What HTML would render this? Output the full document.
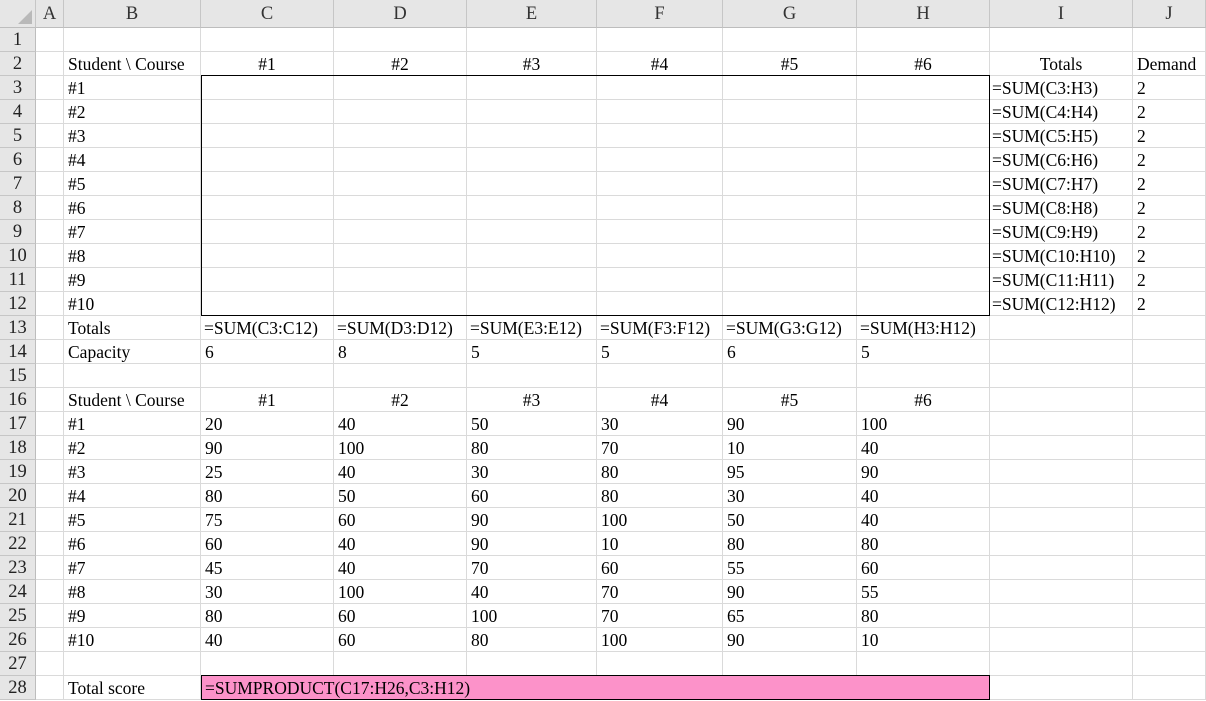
<!DOCTYPE html>
<html><head><meta charset="utf-8"><style>
body{margin:0;background:#fff;width:1206px;height:701px;overflow:hidden;position:relative;font-family:"Liberation Serif",serif;font-size:17.5px;color:#000}
table{border-collapse:separate;border-spacing:0;table-layout:fixed;position:absolute;left:0;top:0}
td{box-sizing:border-box;height:24px;border-right:1px solid #dadada;border-bottom:1px solid #dadada;padding:2px 0 0 4px;white-space:nowrap;overflow:visible;line-height:21px;vertical-align:top}
tr.h td{height:28px;background:#e6e6e6;color:#333;text-align:center;font-size:18.5px;border-right:1px solid #c6c6c6;border-bottom:1px solid #bdbdbd;padding:1px 0 0 0;line-height:26px}
td.r{background:#e6e6e6;color:#222;text-align:center;padding:2px 0 0 0;border-right:1px solid #bdbdbd;border-bottom:1px solid #c6c6c6;font-size:18.5px}
td.c{text-align:center;padding-left:0}
#box{position:absolute;left:201px;top:75px;width:789px;height:241px;border:1px solid #000;box-sizing:border-box}
#pink{position:absolute;left:201px;top:675px;width:789px;height:25px;border:1px solid #000;box-sizing:border-box;background:#fc92c9;padding-left:3px;line-height:25px}
#tri{position:absolute;left:18px;top:10px;width:0;height:0;border-left:14px solid transparent;border-bottom:14px solid #b9b9b9}
</style></head><body>
<table>
<colgroup><col style="width:36px"><col style="width:28px"><col style="width:137px"><col style="width:133px"><col style="width:133px"><col style="width:130px"><col style="width:126px"><col style="width:134px"><col style="width:133px"><col style="width:143px"><col style="width:73px"></colgroup>
<tr class="h"><td></td><td>A</td><td>B</td><td>C</td><td>D</td><td>E</td><td>F</td><td>G</td><td>H</td><td>I</td><td>J</td></tr>
<tr><td class="r">1</td><td></td><td></td><td></td><td></td><td></td><td></td><td></td><td></td><td></td><td></td></tr>
<tr><td class="r">2</td><td></td><td>Student \ Course</td><td class="c">#1</td><td class="c">#2</td><td class="c">#3</td><td class="c">#4</td><td class="c">#5</td><td class="c">#6</td><td class="c">Totals</td><td>Demand</td></tr>
<tr><td class="r">3</td><td></td><td>#1</td><td></td><td></td><td></td><td></td><td></td><td></td><td style="padding-left:2px">=SUM(C3:H3)</td><td>2</td></tr>
<tr><td class="r">4</td><td></td><td>#2</td><td></td><td></td><td></td><td></td><td></td><td></td><td style="padding-left:2px">=SUM(C4:H4)</td><td>2</td></tr>
<tr><td class="r">5</td><td></td><td>#3</td><td></td><td></td><td></td><td></td><td></td><td></td><td style="padding-left:2px">=SUM(C5:H5)</td><td>2</td></tr>
<tr><td class="r">6</td><td></td><td>#4</td><td></td><td></td><td></td><td></td><td></td><td></td><td style="padding-left:2px">=SUM(C6:H6)</td><td>2</td></tr>
<tr><td class="r">7</td><td></td><td>#5</td><td></td><td></td><td></td><td></td><td></td><td></td><td style="padding-left:2px">=SUM(C7:H7)</td><td>2</td></tr>
<tr><td class="r">8</td><td></td><td>#6</td><td></td><td></td><td></td><td></td><td></td><td></td><td style="padding-left:2px">=SUM(C8:H8)</td><td>2</td></tr>
<tr><td class="r">9</td><td></td><td>#7</td><td></td><td></td><td></td><td></td><td></td><td></td><td style="padding-left:2px">=SUM(C9:H9)</td><td>2</td></tr>
<tr><td class="r">10</td><td></td><td>#8</td><td></td><td></td><td></td><td></td><td></td><td></td><td style="padding-left:2px">=SUM(C10:H10)</td><td>2</td></tr>
<tr><td class="r">11</td><td></td><td>#9</td><td></td><td></td><td></td><td></td><td></td><td></td><td style="padding-left:2px">=SUM(C11:H11)</td><td>2</td></tr>
<tr><td class="r">12</td><td></td><td>#10</td><td></td><td></td><td></td><td></td><td></td><td></td><td style="padding-left:2px">=SUM(C12:H12)</td><td>2</td></tr>
<tr><td class="r">13</td><td></td><td>Totals</td><td style="padding-left:3px">=SUM(C3:C12)</td><td style="padding-left:3px">=SUM(D3:D12)</td><td style="padding-left:3px">=SUM(E3:E12)</td><td style="padding-left:3px">=SUM(F3:F12)</td><td style="padding-left:3px">=SUM(G3:G12)</td><td style="padding-left:3px">=SUM(H3:H12)</td><td></td><td></td></tr>
<tr><td class="r">14</td><td></td><td>Capacity</td><td>6</td><td>8</td><td>5</td><td>5</td><td>6</td><td>5</td><td></td><td></td></tr>
<tr><td class="r">15</td><td></td><td></td><td></td><td></td><td></td><td></td><td></td><td></td><td></td><td></td></tr>
<tr><td class="r">16</td><td></td><td>Student \ Course</td><td class="c">#1</td><td class="c">#2</td><td class="c">#3</td><td class="c">#4</td><td class="c">#5</td><td class="c">#6</td><td></td><td></td></tr>
<tr><td class="r">17</td><td></td><td>#1</td><td>20</td><td>40</td><td>50</td><td>30</td><td>90</td><td>100</td><td></td><td></td></tr>
<tr><td class="r">18</td><td></td><td>#2</td><td>90</td><td>100</td><td>80</td><td>70</td><td>10</td><td>40</td><td></td><td></td></tr>
<tr><td class="r">19</td><td></td><td>#3</td><td>25</td><td>40</td><td>30</td><td>80</td><td>95</td><td>90</td><td></td><td></td></tr>
<tr><td class="r">20</td><td></td><td>#4</td><td>80</td><td>50</td><td>60</td><td>80</td><td>30</td><td>40</td><td></td><td></td></tr>
<tr><td class="r">21</td><td></td><td>#5</td><td>75</td><td>60</td><td>90</td><td>100</td><td>50</td><td>40</td><td></td><td></td></tr>
<tr><td class="r">22</td><td></td><td>#6</td><td>60</td><td>40</td><td>90</td><td>10</td><td>80</td><td>80</td><td></td><td></td></tr>
<tr><td class="r">23</td><td></td><td>#7</td><td>45</td><td>40</td><td>70</td><td>60</td><td>55</td><td>60</td><td></td><td></td></tr>
<tr><td class="r">24</td><td></td><td>#8</td><td>30</td><td>100</td><td>40</td><td>70</td><td>90</td><td>55</td><td></td><td></td></tr>
<tr><td class="r">25</td><td></td><td>#9</td><td>80</td><td>60</td><td>100</td><td>70</td><td>65</td><td>80</td><td></td><td></td></tr>
<tr><td class="r">26</td><td></td><td>#10</td><td>40</td><td>60</td><td>80</td><td>100</td><td>90</td><td>10</td><td></td><td></td></tr>
<tr><td class="r">27</td><td></td><td></td><td></td><td></td><td></td><td></td><td></td><td></td><td></td><td></td></tr>
<tr><td class="r">28</td><td></td><td>Total score</td><td></td><td></td><td></td><td></td><td></td><td></td><td></td><td></td></tr>
</table>
<div id="tri"></div>
<div id="box"></div>
<div id="pink">=SUMPRODUCT(C17:H26,C3:H12)</div>
</body></html>
